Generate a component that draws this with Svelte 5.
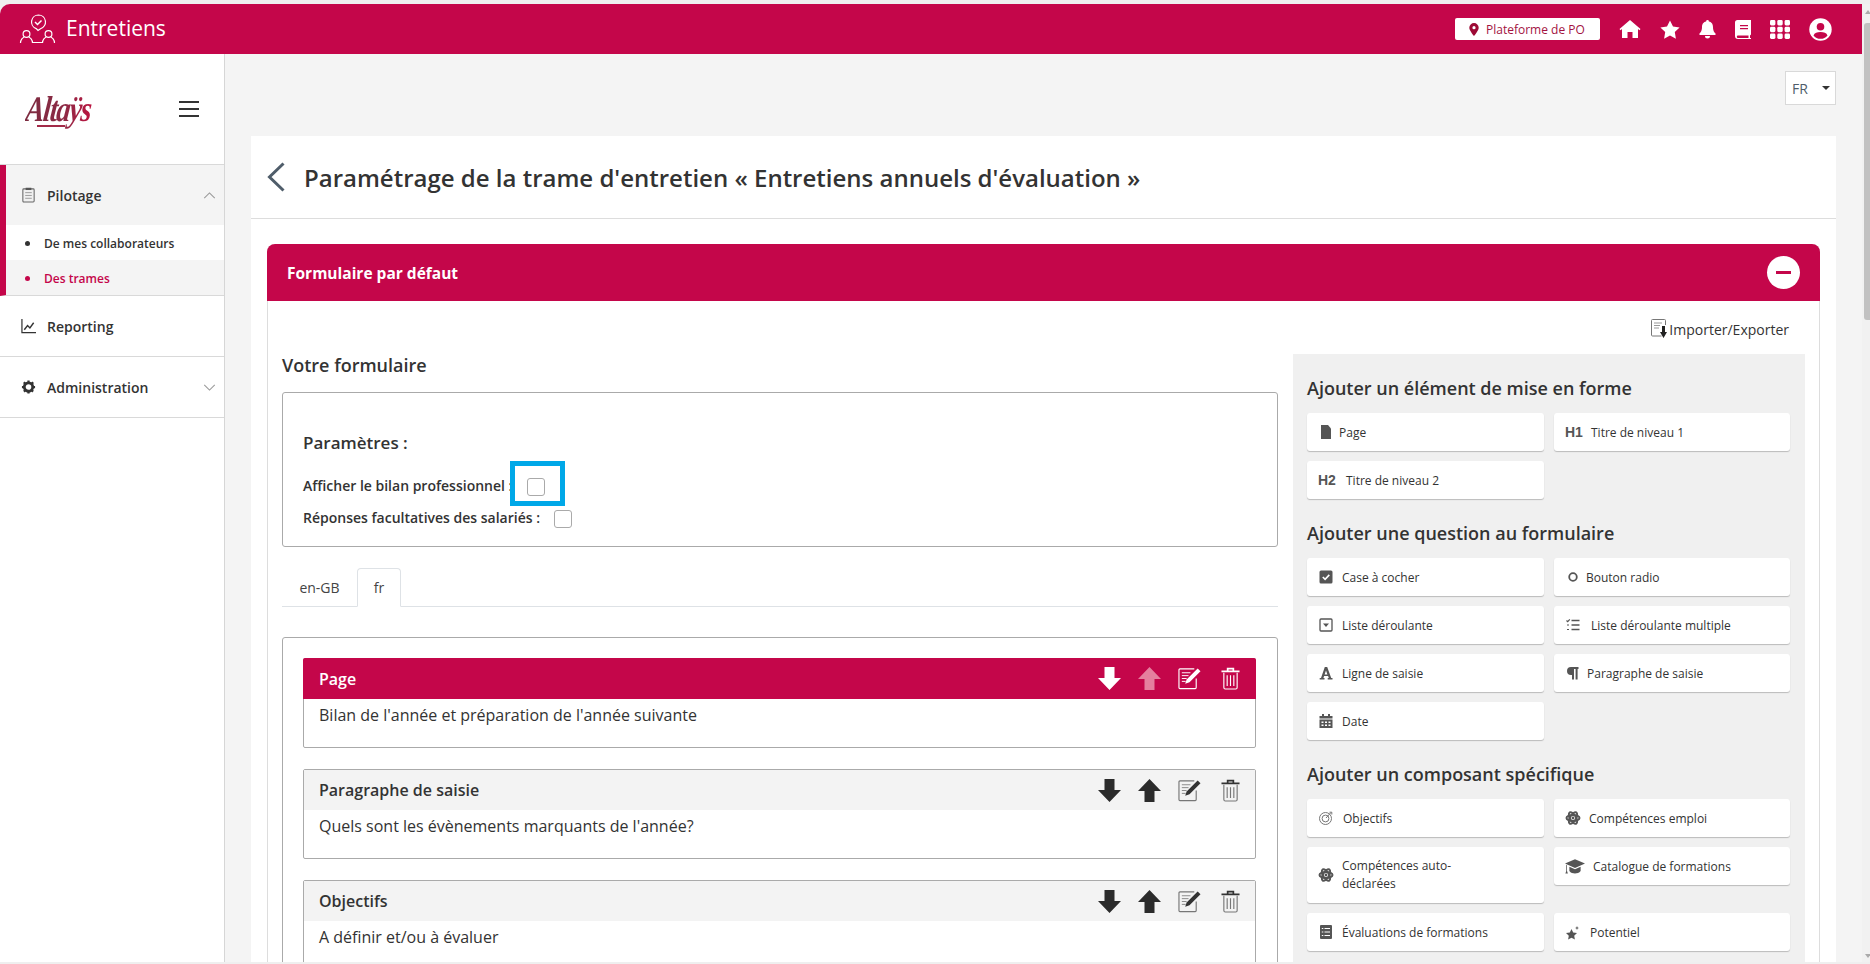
<script>
  const arrow = 'M6.500 0h10v11H23L11.500 23 0 11h6.500z';
  const s1 = [
    { id: 'page', label: 'Page', x: 32 },
    { id: 'h1', label: 'Titre de niveau 1', x: 37 },
    { id: 'h2', label: 'Titre de niveau 2', x: 39 }
  ];
  const s2 = [
    { id: 'check', label: 'Case à cocher', x: 35 },
    { id: 'radio', label: 'Bouton radio', x: 32 },
    { id: 'select', label: 'Liste déroulante', x: 35 },
    { id: 'multi', label: 'Liste déroulante multiple', x: 37 },
    { id: 'font', label: 'Ligne de saisie', x: 35 },
    { id: 'para', label: 'Paragraphe de saisie', x: 33 },
    { id: 'date', label: 'Date', x: 35 }
  ];
  const s3 = [
    { id: 'target', label: 'Objectifs', x: 36 },
    { id: 'atom', label: 'Compétences emploi', x: 35 },
    { id: 'atom', label: 'Compétences auto-déclarées', wrap: true, x: 35 },
    { id: 'grad', label: 'Catalogue de formations', x: 39 },
    { id: 'eval', label: 'Évaluations de formations', x: 35 },
    { id: 'star', label: 'Potentiel', x: 36 }
  ];
  const sections = [
    { title: 'Ajouter un élément de mise en forme', items: s1 },
    { title: 'Ajouter une question au formulaire', items: s2 },
    { title: 'Ajouter un composant spécifique', items: s3 }
  ];
  const blocks = [
    { title: 'Page', text: "Bilan de l'année et préparation de l'année suivante", red: true },
    { title: 'Paragraphe de saisie', text: "Quels sont les évènements marquants de l'année?" },
    { title: 'Objectifs', text: 'A définir et/ou à évaluer' }
  ];
</script>

{#snippet icon(id)}
  <svg class="ci" class:big={id === 'grad'} viewBox="0 0 16 16" aria-hidden="true">
    {#if id === 'page'}
      <path d="M3 1h7l3 3.500V15H3z" fill="#555" />
    {:else if id === 'h1'}
      <text x="0" y="13" class="hx">H1</text>
    {:else if id === 'h2'}
      <text x="0" y="13" class="hx">H2</text>
    {:else if id === 'check'}
      <rect x="1.500" y="1.500" width="13" height="13" rx="1.500" fill="#555" />
      <path d="M4.800 8l2.300 2.300 4.200-4.400" fill="none" stroke="#fff" stroke-width="1.600" />
    {:else if id === 'radio'}
      <circle cx="8" cy="8" r="3.800" fill="none" stroke="#555" stroke-width="1.800" />
    {:else if id === 'select'}
      <rect x="2" y="2" width="12" height="12" rx="1" fill="none" stroke="#555" stroke-width="1.300" />
      <path d="M5 6.400h6L8 10z" fill="#555" />
    {:else if id === 'multi'}
      <path d="M1.500 3.500l1.200 1.200L4.800 2.400M2 12.500h2M2 8h2" fill="none" stroke="#555" stroke-width="1.200" />
      <path d="M6.500 3.500h8M6.500 8h8M6.500 12.500h8" stroke="#555" stroke-width="1.300" />
    {:else if id === 'font'}
      <path d="M6.800 2h2.400l4 11h1.300v1.400H9.700V13h1.100l-.7-2H6.100l-.7 2h1.100v1.400H1.700V13H3zM6.600 9.500h2.800L8 5.400z" fill="#555" fill-rule="evenodd" />
    {:else if id === 'para'}
      <path d="M13.500 2H6a4 4 0 0 0 0 8h1v4.500h2V4h1.600v10.500h2V4h.9z" fill="#555" />
    {:else if id === 'date'}
      <path d="M4 1h2v2h4V1h2v2h2.500v2.500H1.500V3H4zM1.500 6.500h13V15h-13z" fill="#555" />
      <path d="M3.500 8.500h2V10h-2zM7 8.500h2V10H7zM10.500 8.500h2V10h-2zM3.500 11.500h2V13h-2zM7 11.500h2V13H7zM10.500 11.500h2V13h-2z" fill="#fff" />
    {:else if id === 'target'}
      <circle cx="7.500" cy="8.500" r="6" fill="none" stroke="#777" stroke-width="1" />
      <circle cx="7.500" cy="8.500" r="3.400" fill="none" stroke="#777" stroke-width="1" />
      <path d="M8 8l5-5.500M11.500 2.200h2.300v2.300" fill="none" stroke="#777" stroke-width="1" />
    {:else if id === 'atom'}
      <g fill="none" stroke="#555" stroke-width="2">
        <ellipse cx="8" cy="8" rx="6.500" ry="3" />
        <ellipse cx="8" cy="8" rx="6.500" ry="3" transform="rotate(60 8 8)" />
        <ellipse cx="8" cy="8" rx="6.500" ry="3" transform="rotate(120 8 8)" />
      </g>
      <circle cx="8" cy="8" r="1.400" fill="#555" />
    {:else if id === 'grad'}
      <path d="M8 2.500L16 6 8 9.500 0 6zM3.500 8.500L8 10.500l4.500-2V12c-1 1.400-3 2-4.500 2s-3.500-.6-4.500-2zM1 7v5l-.7 2h2L1.600 12V7.300z" fill="#555" />
    {:else if id === 'eval'}
      <rect x="2" y="1" width="12" height="14" rx="1" fill="#555" />
      <path d="M6.500 4.500H12M6.500 8H12M6.500 11.500H12M3.800 4.500h1.500M3.800 8h1.500M3.800 11.500h1.500" stroke="#fff" stroke-width="1.200" />
    {:else if id === 'star'}
      <path d="M6.500 5l1.700 3.500 3.800.5-2.800 2.700.7 3.800-3.400-1.800L3.100 15.500l.7-3.800L1 9l3.800-.5z" fill="#555" />
      <path d="M12 2l.6 1.400L14 4l-1.400.6L12 6l-.6-1.400L10 4l1.400-.6z" fill="#555" />
    {/if}
  </svg>
{/snippet}

<div class="frame">
  <div class="viewport">
    <header class="topbar">
      <div class="brand">
        <svg class="brand-ic" viewBox="0 0 36 30" aria-hidden="true">
          <g fill="none" stroke="#fff" stroke-width="1.200">
            <path d="M19 1a7 7 0 0 1 2 13.700L18.500 16.500l-1.800-1.900A7 7 0 0 1 19 1z" />
            <path d="M15.500 8l2.500 2.500 4-4" stroke-width="1.500" />
            <circle cx="7" cy="20" r="3.400" />
            <circle cx="29" cy="20" r="3.400" />
            <path d="M1 29c0-3.500 2.500-5.500 3.500-5.800M13 29c0-3.500-2.500-5.500-3.500-5.800M23 29c0-3.500 2.500-5.500 3.500-5.800M35 29c0-3.500-2.500-5.500-3.500-5.800M13 28.500h10" />
          </g>
        </svg>
        <span class="brand-name">Entretiens</span>
      </div>
      <div class="tools">
        <div class="platform">
          <svg width="10" height="13" viewBox="0 0 10 13" aria-hidden="true"><path fill-rule="evenodd" d="M5 0a4.700 4.700 0 0 1 4.700 4.700C9.700 7.500 5 13 5 13S.3 7.500.3 4.700A4.700 4.700 0 0 1 5 0zm0 3.100a1.600 1.600 0 1 0 0 3.200 1.600 1.600 0 0 0 0-3.200z" fill="#9d0a35" /></svg>
          <span>Plateforme de PO</span>
        </div>
        <div class="tool-icons">
          <svg width="22" height="20" viewBox="0 0 22 20" aria-hidden="true"><path d="M11 1l10.500 9-1 1.300L19 10v9h-5.500v-6h-5v6H3v-9l-1.500 1.300-1-1.300z" fill="#fff" /></svg>
          <svg width="20" height="19" viewBox="0 0 20 19" aria-hidden="true"><path d="M10 .5l3 6 6.600 1-4.800 4.600 1.100 6.600L10 15.600l-5.900 3.100 1.100-6.600L.4 7.500l6.600-1z" fill="#fff" /></svg>
          <svg width="17" height="20" viewBox="0 0 17 20" aria-hidden="true"><path d="M8.500 1a1.400 1.400 0 0 1 1.400 1.400C13 3 14 5.500 14 8c0 4 1.500 5.500 2.500 6.500V16H.5v-1.500C1.500 13.500 3 12 3 8c0-2.500 1-5 4.100-5.600A1.400 1.400 0 0 1 8.500 1zM6 17h5a2.500 2.500 0 0 1-5 0z" fill="#fff" /></svg>
          <svg width="16" height="19" viewBox="0 0 16 19" aria-hidden="true"><path fill-rule="evenodd" d="M2.500 0H16v14.500l-1 1V18h1v1H3a3 3 0 0 1-3-3V2.500A2.500 2.500 0 0 1 2.500 0zM5 5v1.300h8V5zm0 3v1.300h8V8zM3 15.500a1.200 1.200 0 0 0 0 2.400h10.500v-2.400z" fill="#fff" /></svg>
          <svg width="20" height="19" viewBox="0 0 20 19" aria-hidden="true"><g fill="#fff"><rect x="0" y="0" width="5.400" height="5.400" rx="1.400" /><rect x="7.300" y="0" width="5.400" height="5.400" rx="1.400" /><rect x="14.600" y="0" width="5.400" height="5.400" rx="1.400" /><rect x="0" y="6.800" width="5.400" height="5.400" rx="1.400" /><rect x="7.300" y="6.800" width="5.400" height="5.400" rx="1.400" /><rect x="14.600" y="6.800" width="5.400" height="5.400" rx="1.400" /><rect x="0" y="13.600" width="5.400" height="5.400" rx="1.400" /><rect x="7.300" y="13.600" width="5.400" height="5.400" rx="1.400" /><rect x="14.600" y="13.600" width="5.400" height="5.400" rx="1.400" /></g></svg>
          <svg width="23" height="23" viewBox="0 0 23 23" aria-hidden="true"><circle cx="11.500" cy="11.500" r="11.200" fill="#fff" /><circle cx="11.500" cy="8.800" r="3.800" fill="#c4064a" /><path d="M4.500 17.500c1-2.800 3.500-3.500 7-3.500s6 .7 7 3.500a9 9 0 0 1-14 0z" fill="#c4064a" /></svg>
        </div>
      </div>
    </header>

    <div class="below">
      <aside class="sidebar">
        <div class="logo-row">
          <div class="logo-box">
            <span class="logo">Altaÿs</span>
            <i class="logo-line"></i>
          </div>
          <div class="burger"><i></i><i></i><i></i></div>
        </div>
        <nav class="nav">
          <div class="group open">
            <div class="nav-row grey">
              <svg class="nav-ic" viewBox="0 0 14 17" aria-hidden="true">
                <rect x="1" y="2" width="12" height="14" rx="1" fill="#f0f0f0" stroke="#666" stroke-width="1.100" />
                <rect x="4" y="0.800" width="6" height="2.400" fill="#555" />
                <path d="M3.500 6h7M3.500 9h7M3.500 12h7" stroke="#999" stroke-width="1" />
              </svg>
              <span class="nav-label">Pilotage</span>
              <svg class="chev" viewBox="0 0 14 8" aria-hidden="true"><path d="M1 7l6-6 6 6" fill="none" stroke="#999" stroke-width="1.200" /></svg>
            </div>
            <div class="sub"><b></b>De mes collaborateurs</div>
            <div class="sub current"><b></b>Des trames</div>
          </div>
          <div class="nav-row bordered">
            <svg class="nav-ic" viewBox="0 0 16 16" aria-hidden="true">
              <path d="M1 .5V15h15" fill="none" stroke="#333" stroke-width="1.300" />
              <path d="M3.500 12L7 7.500 9.500 10l4-5.500" fill="none" stroke="#333" stroke-width="1.500" />
            </svg>
            <span class="nav-label">Reporting</span>
          </div>
          <div class="nav-row bordered">
            <svg class="nav-ic" viewBox="0 0 16 16" aria-hidden="true">
              <circle cx="8" cy="8" r="4.500" fill="none" stroke="#333" stroke-width="3" />
              <path d="M8 1v14M1 8h14M3 3l10 10M13 3L3 13" stroke="#333" stroke-width="2.400" stroke-dasharray="2.400 9.200" />
            </svg>
            <span class="nav-label">Administration</span>
            <svg class="chev" viewBox="0 0 14 8" aria-hidden="true"><path d="M1 1l6 6 6-6" fill="none" stroke="#999" stroke-width="1.200" /></svg>
          </div>
        </nav>
      </aside>

      <main class="main">
        <div class="lang-row">
          <div class="lang"><span>FR</span><em></em></div>
        </div>
        <section class="card">
          <div class="page-title">
            <svg class="back" viewBox="0 0 18 30" aria-hidden="true"><path d="M16.500 1.500L2.500 15l14 13.500" fill="none" stroke="#4f5d6a" stroke-width="3" /></svg>
            <h1>Paramétrage de la trame d'entretien « Entretiens annuels d'évaluation »</h1>
          </div>
          <div class="panel">
            <div class="panel-head">
              <span>Formulaire par défaut</span>
              <div class="minus"><i></i></div>
            </div>
            <div class="panel-body">
              <div class="import">
                <svg width="16" height="20" viewBox="0 0 16 20" aria-hidden="true">
                  <path d="M10.500 17H1.500a1 1 0 0 1-1-1V1.500a1 1 0 0 1 1-1h12a1 1 0 0 1 1 1V6" fill="none" stroke="#777" stroke-width="1" />
                  <path d="M3 4h8M3 6.500h6M3 9h5" stroke="#999" stroke-width="1" />
                  <path d="M11 7h3v6h2l-3.500 6L9 13h2z" fill="#222" />
                </svg>
                <span>Importer/Exporter</span>
              </div>
              <div class="columns">
                <div class="left">
                  <h2 class="form-title">Votre formulaire</h2>
                  <div class="params">
                    <h3>Paramètres :</h3>
                    <div class="param first">
                      <span>Afficher le bilan professionnel :</span>
                      <div class="box"></div>
                      <div class="highlight"></div>
                    </div>
                    <div class="param second">
                      <span>Réponses facultatives des salariés :</span>
                      <div class="box"></div>
                    </div>
                  </div>
                  <div class="tabs">
                    <div class="tab">en-GB</div>
                    <div class="tab active">fr</div>
                  </div>
                  <div class="blocks">
                    {#each blocks as b}
                      <div class="block" class:red={b.red}>
                        <div class="block-head">
                          <span>{b.title}</span>
                          <div class="actions">
                            <svg class="act" viewBox="0 0 23 23" aria-hidden="true"><path d={arrow} /></svg>
                            <svg class="act up" class:dim={b.red} viewBox="0 0 23 23" aria-hidden="true"><path d={arrow} transform="rotate(180 11.500 11.500)" /></svg>
                            <svg class="act edit" viewBox="0 0 24 24" aria-hidden="true">
                              <path class="ln" d="M19 12v9.500a1 1 0 0 1-1 1H2a1 1 0 0 1-1-1V3a1 1 0 0 1 1-1h15" />
                              <path class="ln thin" d="M4 6h9M4 9h7M4 12h5M4 15h4" />
                              <path class="fl" d="M20.500 1.500l3 3L12 16l-4.500 1.500L9 13z" />
                            </svg>
                            <svg class="act trash" viewBox="0 0 20 24" aria-hidden="true">
                              <path class="ln" d="M3 6v15.500A1.500 1.500 0 0 0 4.500 23h11a1.500 1.500 0 0 0 1.500-1.500V6M6.500 8.500V20M10 8.500V20M13.500 8.500V20" />
                              <path class="ln bold" d="M.5 4.500h19M7 4V1.500h6V4" />
                            </svg>
                          </div>
                        </div>
                        <div class="block-body">{b.text}</div>
                      </div>
                    {/each}
                  </div>
                </div>
                <div class="palette">
                  {#each sections as sec}
                    <h3 class="pal-title">{sec.title}</h3>
                    <div class="pal-grid">
                      {#each sec.items as it}
                        <div class="pal-item" class:tall={it.wrap}>
                          {@render icon(it.id)}
                          <span class:wrap={it.wrap} style:margin-left="{it.x - 27}px">{it.label}</span>
                        </div>
                      {/each}
                    </div>
                  {/each}
                </div>
              </div>
            </div>
          </div>
        </section>
      </main>
    </div>
  </div>
  <div class="scrollbar">
    <span class="sb-up"></span>
    <span class="sb-thumb"></span>
    <span class="sb-down"></span>
  </div>
</div>

<style>
  :global(body) {
    margin: 0;
    background: #f4f4f4;
    overflow: hidden;
    font-family: "Open Sans", "Noto Sans", sans-serif;
    color: #333;
  }
  h1, h2, h3 { margin: 0; font-weight: 600; }
  .frame {
    height: 964px;
    display: flex;
    padding-top: 4px;
    padding-bottom: 2px;
    box-sizing: border-box;
    background: #efefef;
    overflow: hidden;
  }
  .viewport {
    width: 1862px;
    height: 958px;
    display: flex;
    flex-direction: column;
    overflow: hidden;
  }
  .topbar {
    height: 50px;
    flex: none;
    background: #c4064a;
    border-top-left-radius: 10px;
    display: flex;
    align-items: center;
    justify-content: space-between;
    color: #fff;
  }
  .brand { display: flex; align-items: center; padding-left: 19px; }
  .brand-ic { width: 37px; height: 30px; margin-right: 10px; }
  .brand-name { font-size: 21px; line-height: 1; margin-top: -2px; }
  .tools { display: flex; align-items: center; padding-right: 30px; }
  .platform {
    width: 145px;
    height: 22px;
    box-sizing: border-box;
    background: #fff;
    border-radius: 2px;
    display: flex;
    align-items: center;
    padding-left: 14px;
    gap: 7px;
    font-size: 12px;
    color: #a3123f;
    margin-right: 19px;
  }
  .tool-icons { display: flex; align-items: center; gap: 19px; }

  .below { flex: 1; display: flex; min-height: 0; }
  .sidebar {
    width: 225px;
    flex: none;
    box-sizing: border-box;
    background: #fff;
    border-right: 1px solid #d6d6d6;
  }
  .logo-row {
    height: 111px;
    box-sizing: border-box;
    display: flex;
    align-items: center;
    justify-content: space-between;
    padding: 0 25px 0 26px;
    border-bottom: 1px solid #d9d9d9;
  }
  .logo-box { position: relative; width: 62px; height: 44px; }
  .logo {
    position: absolute;
    left: 0;
    top: 0;
    padding-right: 8px;
    font-family: "Liberation Serif", serif;
    font-style: italic;
    font-weight: 700;
    font-size: 36px;
    letter-spacing: -1.500px;
    line-height: 44px;
    background: linear-gradient(90deg, #7c2b40, #8e2a45 55%, #c4103f);
    -webkit-background-clip: text;
    background-clip: text;
    color: transparent;
    white-space: nowrap;
    transform: scaleX(0.78) skewX(-8deg);
    transform-origin: left center;
  }
  .logo-line {
    position: absolute;
    left: 11px;
    top: 38px;
    width: 28px;
    height: 1.500px;
    background: #a32a48;
  }
  .burger { width: 20px; display: flex; flex-direction: column; gap: 5px; }
  .burger i { display: block; height: 2px; background: #333; }
  .group.open { border-left: 6px solid #c4064a; border-bottom: 1px solid #d9d9d9; }
  .nav-row {
    height: 60px;
    box-sizing: border-box;
    display: flex;
    align-items: center;
    position: relative;
    padding-left: 21px;
    font-size: 14px;
  }
  .group .nav-row { padding-left: 15px; height: 60px; }
  .grey { background: #f4f4f4; }
  .bordered { border-bottom: 1px solid #d9d9d9; height: 61px; }
  .nav-ic { width: 15px; height: 16px; flex: none; }
  .nav-label { margin-left: 11px; font-size: 14px; font-weight: 600; color: #333; }
  .chev { position: absolute; right: 8px; top: 50%; width: 13px; height: 7px; margin-top: -3px; }
  .sub {
    height: 35px;
    box-sizing: border-box;
    padding-top: 2px;
    display: flex;
    align-items: center;
    padding-left: 19px;
    font-size: 12px;
    font-weight: 600;
    color: #333;
  }
  .sub b { width: 5px; height: 5px; border-radius: 50%; background: #333; margin-right: 14px; }
  .sub.current { background: #f4f4f4; color: #c4064a; }
  .sub.current b { background: #c4064a; }

  .main { flex: 1; min-width: 0; padding: 0 26px 0 26px; overflow: hidden; background: #f4f4f4; }
  .lang-row { height: 82px; display: flex; justify-content: flex-end; align-items: flex-start; padding-top: 17px; box-sizing: border-box; }
  .lang {
    width: 51px;
    height: 34px;
    box-sizing: border-box;
    background: #fff;
    border: 1px solid #d9d9d9;
    display: flex;
    align-items: center;
    justify-content: space-between;
    padding: 0 5px 0 6px;
    font-size: 14px;
    color: #4f5d6a;
  }
  .lang em { border: 4px solid transparent; border-top-color: #333; border-bottom: 0; margin-top: -1px; }
  .card { background: #fff; }
  .page-title {
    height: 83px;
    box-sizing: border-box;
    display: flex;
    align-items: center;
    padding-left: 16px;
    border-bottom: 1px solid #ddd;
  }
  .back { width: 18px; height: 30px; margin-right: 19px; }
  .page-title h1 { font-size: 24px; color: #333; font-weight: 600; }
  .panel {
    margin: 25px 16px 0;
    border-radius: 8px 8px 0 0;
    border: 1px solid #ddd;
    border-top: 0;
  }
  .panel-head {
    margin: 0 -1px;
    height: 57px;
    background: #c4064a;
    border-radius: 8px 8px 0 0;
    display: flex;
    align-items: center;
    justify-content: space-between;
    padding: 0 20px;
    color: #fff;
    font-size: 15.500px;
    font-weight: 700;
  }
  .minus { width: 33px; height: 33px; border-radius: 50%; background: #fff; display: flex; align-items: center; justify-content: center; }
  .minus i { width: 15px; height: 3px; background: #c4064a; }
  .panel-body { padding: 0 14px; }
  .import {
    height: 54px;
    display: flex;
    align-items: center;
    justify-content: flex-end;
    padding-right: 16px;
    gap: 2px;
    font-size: 14px;
    color: #333;
    box-sizing: border-box;
    padding-top: 2px;
  }
  .columns { display: flex; gap: 15px; align-items: flex-start; }
  .left { width: 996px; flex: none; }
  .form-title { font-size: 18px; font-weight: 600; line-height: 24px; margin-top: -2px; margin-bottom: 15px; color: #333; }
  .params {
    height: 155px;
    box-sizing: border-box;
    border: 1px solid #aaa;
    border-radius: 3px;
    padding: 38px 20px 0;
  }
  .params h3 { font-size: 17px; font-weight: 600; line-height: 24px; margin-bottom: 16px; }
  .param { display: flex; align-items: center; font-size: 14px; font-weight: 600; color: #333; height: 32px; position: relative; }
  .param span { margin-bottom: 4px; white-space: nowrap; }
  .param.first span { width: 224px; }
  .param.second span { width: 251px; }
  .highlight {
    position: absolute;
    left: 207px;
    top: -10px;
    width: 55px;
    height: 45px;
    box-sizing: border-box;
    border: 5px solid #00a8e8;
  }
  .box { width: 18px; height: 18px; box-sizing: border-box; border: 1px solid #aaa; border-radius: 3px; background: #fff; }
  .tabs { display: flex; margin-top: 21px; height: 38px; border-bottom: 1px solid #dee2e6; }
  .tab { width: 75px; box-sizing: border-box; display: flex; align-items: center; justify-content: center; font-size: 14px; color: #444; }
  .tab.active {
    width: 44px;
    height: 39px;
    border: 1px solid #dee2e6;
    border-bottom-color: #fff;
    border-radius: 4px 4px 0 0;
    background: #fff;
  }
  .blocks {
    margin-top: 30px;
    border: 1px solid #aaa;
    border-radius: 3px;
    padding: 20px 20px 0;
    height: 400px;
    box-sizing: border-box;
  }
  .block { border: 1px solid #aaa; border-radius: 2px; margin-bottom: 21px; height: 90px; box-sizing: border-box; width: 953px; }
  .block-head {
    height: 40px;
    background: #f3f3f3;
    display: flex;
    align-items: center;
    justify-content: space-between;
    padding: 0 15px 0 15px;
    font-size: 16px;
    font-weight: 600;
    color: #333;
  }
  .block.red .block-head { background: #c4064a; color: #fff; margin: -1px -1px 0; padding: 0 16px 0 16px; height: 41px; border-radius: 2px 2px 0 0; }
  .block-body { padding: 4px 15px; font-size: 16px; line-height: 24px; color: #333; }
  .actions { display: flex; align-items: center; gap: 17px; }
  .act { width: 23px; height: 23px; fill: #2b2b2b; }
  .block.red .act { fill: #fff; }
  .block.red .act.dim { fill: #e57f9e; }
  .act.trash { width: 19px; margin-left: 3px; }
  .ln { fill: none; stroke: #777; stroke-width: 1.200; }
  .ln.thin { stroke: #888; stroke-width: 1; }
  .ln.bold { stroke: #333; stroke-width: 1.800; }
  .fl { fill: #333; }
  .block.red .ln, .block.red .ln.thin, .block.red .ln.bold { stroke: #fff; }
  .block.red .fl { fill: #fff; }

  .palette { width: 512px; height: 640px; flex: none; background: #f0f0f0; box-sizing: border-box; padding: 17px 15px 0 14px; margin-top: -1px; }
  .pal-title { font-size: 18px; font-weight: 600; height: 30px; line-height: 34px; color: #333; white-space: nowrap; }
  .pal-title:nth-of-type(3) { margin-top: 1px; }
  .pal-grid {
    display: grid;
    grid-template-columns: 237px 236px;
    column-gap: 10px;
    row-gap: 10px;
    align-items: start;
    margin: 12px 0 17px;
  }
  .pal-item {
    height: 38px;
    box-sizing: border-box;
    background: #fff;
    border-radius: 3px;
    box-shadow: 0 1px 1px #bbb;
    display: flex;
    align-items: center;
    padding-left: 11px;
    font-size: 12px;
    color: #333;
  }
  .pal-item.tall { height: 56px; }
  .wrap { width: 115px; line-height: 18px; }
  .ci { width: 16px; height: 16px; flex: none; overflow: visible; }
  .ci.big { transform: scale(1.250); transform-origin: left center; }
  .hx { font-family: "Liberation Sans", sans-serif; font-size: 14px; font-weight: 700; fill: #555; }

  .scrollbar { width: 8px; flex: none; position: relative; background: #f1f1f1; height: 958px; }
  .sb-thumb { position: absolute; left: 2px; right: 0; top: 19px; height: 297px; background: #c1c1c1; border-radius: 3px 0 0 3px; }
  .sb-up { position: absolute; left: 3px; top: 6px; border: 3px solid transparent; border-bottom: 4px solid #aaa; border-top: 0; }
  .sb-down { position: absolute; left: 3px; bottom: 4px; border: 3px solid transparent; border-top: 4px solid #aaa; border-bottom: 0; }
</style>
